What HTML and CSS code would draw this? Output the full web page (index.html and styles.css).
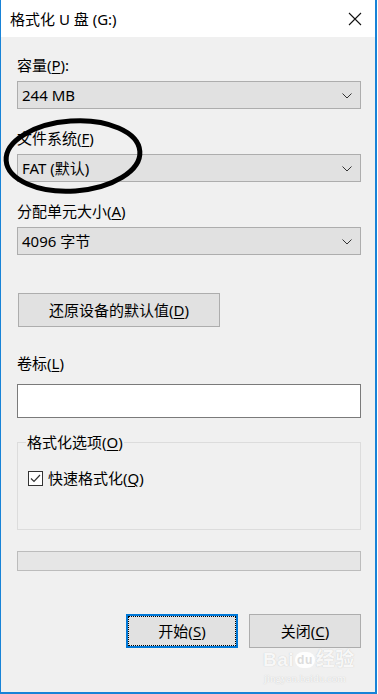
FILE: index.html
```html
<!DOCTYPE html>
<html lang="zh-CN">
<head>
  <meta charset="UTF-8">
  <title>格式化 U 盘 (G:)</title>
  <link rel="stylesheet" href="styles.css">
</head>
<body>
  <div class="dialog">
    <div class="titlebar">
      <span class="title">格式化 U 盘 (G:)</span>
      <svg class="close" width="14" height="14" viewBox="0 0 14 14">
        <path d="M1 1 L13 13 M13 1 L1 13" stroke="#111" stroke-width="1.1" fill="none"/>
      </svg>
    </div>

    <div class="content">
      <div class="label first">容量(<u>P</u>):</div>
      <div class="select">
        <span>244 MB</span>
        <svg class="chev" width="10" height="6" viewBox="0 0 10 6"><path d="M0.5 0.5 L5 5 L9.5 0.5" stroke="#333" fill="none"/></svg>
      </div>

      <div class="label">文件系统(<u>F</u>)</div>
      <div class="select">
        <span>FAT (默认)</span>
        <svg class="chev" width="10" height="6" viewBox="0 0 10 6"><path d="M0.5 0.5 L5 5 L9.5 0.5" stroke="#333" fill="none"/></svg>
      </div>

      <div class="label">分配单元大小(<u>A</u>)</div>
      <div class="select">
        <span>4096 字节</span>
        <svg class="chev" width="10" height="6" viewBox="0 0 10 6"><path d="M0.5 0.5 L5 5 L9.5 0.5" stroke="#333" fill="none"/></svg>
      </div>

      <div class="btn restore">还原设备的默认值(<u>D</u>)</div>

      <div class="label volume">卷标(<u>L</u>)</div>
      <div class="textbox"></div>

      <fieldset class="group">
        <legend>格式化选项(<u>O</u>)</legend>
        <div class="check">
          <span class="box">
            <svg width="13" height="13" viewBox="0 0 13 13"><path d="M2 6.5 L5 9.5 L11 3" stroke="#333" stroke-width="1.2" fill="none"/></svg>
          </span>
          <span>快速格式化(<u>Q</u>)</span>
        </div>
      </fieldset>

      <div class="progress"></div>

      <div class="actions">
        <div class="btn primary">开始(<u>S</u>)</div>
        <div class="btn">关闭(<u>C</u>)</div>
      </div>
    </div>

    <!-- hand-drawn annotation circle -->
    <svg class="mark" width="150" height="84" viewBox="0 0 150 84">
      <ellipse cx="72" cy="42" rx="67" ry="35" transform="rotate(-4 72 42)" stroke="#000" stroke-width="5" fill="none"/>
    </svg>

    <div class="watermark">
      <div class="wm-top">Bai<span class="paw">du</span>经验</div>
      <div class="wm-url">jingyan.baidu.com</div>
    </div>
  </div>
</body>
</html>
```

FILE: styles.css
```css
body, html {
  margin: 0;
  padding: 0;
  background: #fff;
  font-family: "Noto Sans", "Noto Sans CJK SC", sans-serif;
  font-size: 15px;
  color: #000;
}

u {
  text-decoration-thickness: 1px;
  text-underline-offset: 2px;
}

.dialog {
  position: relative;
  width: 377px;
  height: 694px;
  box-sizing: border-box;
  border-left: 1px solid #1883d7;
  border-right: 2px solid #1883d7;
  border-bottom: 2px solid #1883d7;
  background: #f0f0f0;
  overflow: hidden;
}

.titlebar {
  height: 37px;
  background: #fff;
  display: flex;
  align-items: center;
  justify-content: space-between;
  padding: 0 13px 0 9px;
}

.title {
  line-height: 20px;
  margin-top: 1px;
}

.close {
  margin-top: 1px;
}

.content {
  display: flex;
  flex-direction: column;
  padding: 0 14px 0 16px;
}

.label {
  line-height: 20px;
  height: 20px;
  margin-top: 19px;
  margin-bottom: 6px;
}

.label.first {
  margin-top: 18px;
}

.select {
  height: 28px;
  box-sizing: border-box;
  border: 1px solid #adadad;
  background: #e1e1e1;
  display: flex;
  align-items: center;
  justify-content: space-between;
  padding: 0 8px 0 4px;
}

.select span {
  line-height: 20px;
}

.chev {
  margin-top: 1px;
}

.btn {
  height: 34px;
  box-sizing: border-box;
  border: 1px solid #adadad;
  background: #e1e1e1;
  display: flex;
  align-items: center;
  justify-content: center;
  line-height: 20px;
}

.restore {
  width: 202px;
  margin-top: 38px;
  margin-left: 1px;
}

.label.volume {
  margin-top: 26px;
  margin-bottom: 11px;
}

.textbox {
  height: 34px;
  box-sizing: border-box;
  border: 1px solid #7a7a7a;
  background: #fff;
}

.group {
  margin: 14px 0 0 0;
  padding: 0 8px 0 8px;
  height: 98px;
  box-sizing: border-box;
  border: 1px solid #dcdcdc;
  min-width: 0;
}

.group legend {
  padding: 0 1px;
  line-height: 20px;
}

.check {
  display: flex;
  align-items: center;
  gap: 5px;
  margin: 16px 0 0 2px;
  line-height: 20px;
}

.check .box {
  width: 15px;
  height: 15px;
  box-sizing: border-box;
  border: 1px solid #333;
  background: #fff;
  display: flex;
  align-items: center;
  justify-content: center;
}

.progress {
  margin-top: 21px;
  height: 20px;
  box-sizing: border-box;
  border: 1px solid #bcbcbc;
  background: #e6e6e6;
}

.actions {
  display: flex;
  justify-content: flex-end;
  gap: 11px;
  margin-top: 43px;
}

.actions .btn {
  width: 112px;
}

.actions .btn.primary {
  border: 2px solid #0078d7;
  outline: 1px dotted #000;
  outline-offset: -3px;
}

.mark {
  position: absolute;
  left: 0;
  top: 114px;
}

.watermark {
  position: absolute;
  left: 262px;
  top: 648px;
  color: rgba(255, 255, 255, 0.9);
  text-shadow: 0 0 1px rgba(170, 170, 170, 0.7);
  font-family: "Liberation Sans", "Noto Sans CJK SC", sans-serif;
}

.wm-top {
  font-size: 19px;
  font-weight: bold;
  line-height: 24px;
  letter-spacing: 0.5px;
}

.paw {
  display: inline-block;
  font-size: 12px;
  line-height: 14px;
  padding: 1px 2px;
  margin: 0 1px;
  border-radius: 8px;
  background: rgba(255, 255, 255, 0.9);
  color: #dcdcdc;
  text-shadow: none;
  vertical-align: 2px;
}

.wm-url {
  font-family: "Liberation Serif", serif;
  font-size: 11px;
  line-height: 12px;
  margin-left: 1px;
}
```
